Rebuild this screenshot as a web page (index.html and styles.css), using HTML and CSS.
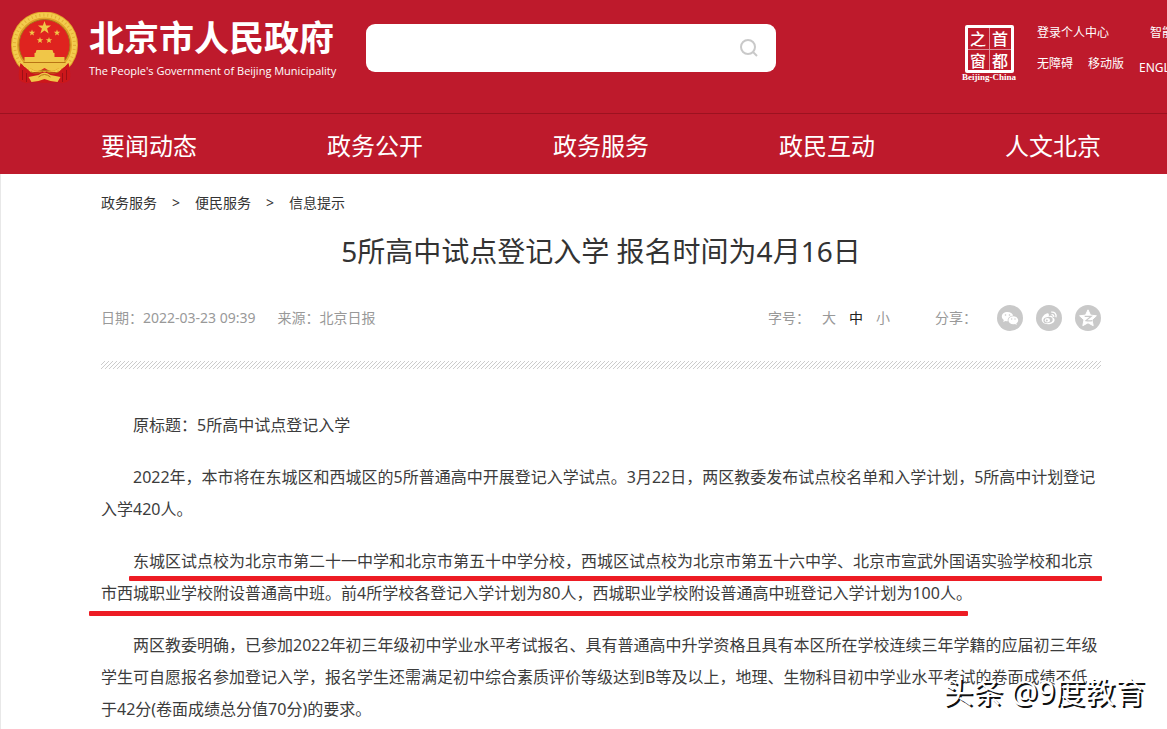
FILE: index.html
```html
<!DOCTYPE html>
<html lang="zh-CN">
<head>
<meta charset="utf-8">
<title>5所高中试点登记入学 报名时间为4月16日</title>
<link rel="stylesheet" href="styles.css">
</head>
<body>
<div class="page">
  <header class="site-header">
    <div class="masthead">
      <a class="brand" href="#">
        <svg class="emblem" viewBox="0 0 68 72" aria-hidden="true">
          <circle cx="34" cy="33" r="33.500" fill="#e3a42a"/>
          <circle cx="34" cy="33" r="30" fill="none" stroke="#f3cc4e" stroke-width="5"/>
          <circle cx="34" cy="33" r="30" fill="none" stroke="#e4ae34" stroke-width="3" stroke-dasharray="1 3"/>
          <circle cx="34" cy="33" r="25.500" fill="#df231f" stroke="#a8741c" stroke-width="1"/>
          <path d="M10 51 Q7 62 9 68 Q14 73 21 70 L34 71 L47 70 Q54 73 59 68 Q61 62 58 51 L48 60 H20z" fill="#cc171b"/>
          <path d="M12 58v10M16 61v9M52 61v9M56 58v10" stroke="#9c1016" stroke-width="1"/>
          <g fill="#f0c648">
            <path d="M34 9l1.600 4.600h5l-4 3 1.500 4.800-4.100-2.900-4.100 2.900 1.500-4.800-4-3h5z"/>
            <path id="small-star" d="M21.500 17.500l.8 2.200h2.400l-1.900 1.500.7 2.400-2-1.400-2 1.400.7-2.400-1.900-1.500h2.400z"/>
            <use href="#small-star" x="25"/>
            <use href="#small-star" x="8" y="7.500"/>
            <use href="#small-star" x="17" y="7.500"/>
            <path d="M26 38h16l1 3H25zM24 41h20v4H24zM14 45h40v5H14z"/>
            <path d="M11 51h46l-3 4q-7 1-9 3-6 2-11-2-5 4-11 2-2-2-9-3z"/>
            <path d="M18 65l10-2q6-5 12 0l10 2-3 5-7-1-6-2-6 2-7 1z"/>
          </g>
          <path d="M13 50.500h42M20 60q8 3 14-2 6 5 14 2M28 65q6-5 12 0" fill="none" stroke="#b97515" stroke-width="1"/>
        </svg>
        <span class="brand-text">
          <strong class="brand-name">北京市人民政府</strong>
          <span class="brand-sub">The People's Government of Beijing Municipality</span>
        </span>
      </a>
      <form class="search" role="search">
        <input class="search-input" type="text" aria-label="搜索">
        <button class="search-button" type="button" aria-label="搜索">
          <svg width="20" height="20" viewBox="0 0 20 20" fill="none" stroke="#c9c9c9" stroke-width="2" aria-hidden="true"><circle cx="9" cy="9" r="7"/><path d="M14 14l4 4"/></svg>
        </button>
      </form>
      <a class="capital" href="#">
        <span class="seal"><span>之</span><span>首</span><span>窗</span><span>都</span></span>
        <span class="seal-caption">Beijing-China</span>
      </a>
      <nav class="tools" aria-label="工具">
        <div class="tools-row spread"><a href="#">登录个人中心</a><a href="#">智能问答</a></div>
        <div class="tools-row"><a href="#">无障碍</a><a href="#">移动版</a><a class="english" href="#">ENGLISH</a></div>
      </nav>
    </div>
    <nav class="main-nav" aria-label="主导航">
      <a href="#">要闻动态</a><a href="#">政务公开</a><a href="#">政务服务</a><a href="#">政民互动</a><a href="#">人文北京</a>
    </nav>
  </header>
  <main class="content">
    <nav class="crumbs" aria-label="位置"><a href="#">政务服务</a><span>&gt;</span><a href="#">便民服务</a><span>&gt;</span><a href="#">信息提示</a></nav>
    <h1 class="title">5所高中试点登记入学 报名时间为4月16日</h1>
    <div class="meta">
      <span class="source"><span>日期：2022-03-23 09:39</span><span>来源：北京日报</span></span>
      <span class="sizes"><span class="sizes-label">字号：</span><button type="button">大</button><button class="current" type="button">中</button><button type="button">小</button></span>
      <span class="share"><span class="share-label">分享：</span>
        <a href="#" aria-label="微信"><svg viewBox="0 0 26 26" aria-hidden="true"><circle cx="13" cy="13" r="13" fill="#c9c9c9"/><path d="M10.500 7C7 7 4.800 9 4.800 11.600c0 1.500.8 2.700 2 3.500l-.6 2 2.300-1.200c.8.200 1.400.3 2.300.3-.6-3.200 2-5.600 5.400-5.500C15.700 8.500 13.400 7 10.500 7z" fill="#fff"/><path d="M16.300 11.300c-2.900 0-4.900 1.800-4.900 4s2 4 4.900 4c.6 0 1.200-.1 1.700-.2l1.800 1-.5-1.700c1.200-.8 1.900-1.900 1.900-3.100 0-2.200-2.100-4-4.900-4z" fill="#fff"/><g fill="#c9c9c9"><circle cx="8.500" cy="10" r=".8"/><circle cx="12.500" cy="10" r=".8"/><circle cx="14.700" cy="14" r=".7"/><circle cx="18" cy="14" r=".7"/></g></svg></a>
        <a href="#" aria-label="微博"><svg viewBox="0 0 26 26" aria-hidden="true"><circle cx="13" cy="13" r="13" fill="#c9c9c9"/><path d="M12.500 8.700c-1-1-3.200.1-4.800 1.900-1.200 1.300-2 2.600-2 4 0 2.800 3 4.700 6.300 4.700 3.700 0 6.600-2.100 6.600-4.400 0-1.300-1-2-2-2.300.4-1.400-.7-2.400-3.900-1.400.4-1 .3-2-.2-2.500z" fill="#fff"/><ellipse cx="12" cy="15" rx="4.700" ry="3.100" transform="rotate(-8 12 15)" fill="#c9c9c9"/><ellipse cx="11.400" cy="15.200" rx="2.600" ry="2.200" fill="#fff"/><circle cx="10.800" cy="15.600" r="1" fill="#c9c9c9"/><path d="M15.500 9.700c1.500-.3 2.600.8 2.200 2.300M15.200 7.200c3.200-.7 5.600 2 4.700 5" fill="none" stroke="#fff" stroke-width="1.300"/></svg></a>
        <a href="#" aria-label="QQ空间"><svg viewBox="0 0 26 26" aria-hidden="true"><circle cx="13" cy="13" r="13" fill="#c9c9c9"/><path d="M13 4.800l2.500 5.300 5.900.7-4.400 4 1.200 5.900-5.200-2.900-5.200 2.900 1.200-5.900-4.400-4 5.900-.7z" fill="#fff" stroke="#fff" stroke-linejoin="round"/><path d="M9.700 11.300h6.500l-5.200 4.300c2 .5 4 .5 6.300 0" fill="none" stroke="#c9c9c9" stroke-width="1.200"/></svg></a>
      </span>
    </div>
    <article class="article">
      <p>原标题：5所高中试点登记入学</p>
      <p>2022年，本市将在东城区和西城区的5所普通高中开展登记入学试点。3月22日，两区教委发布试点校名单和入学计划，5所高中计划登记入学420人。</p>
      <p class="marked">东城区试点校为北京市第二十一中学和北京市第五十中学分校，西城区试点校为北京市第五十六中学、北京市宣武外国语实验学校和北京市西城职业学校附设普通高中班。前4所学校各登记入学计划为80人，西城职业学校附设普通高中班登记入学计划为100人。</p>
      <p>两区教委明确，已参加2022年初三年级初中学业水平考试报名、具有普通高中升学资格且具有本区所在学校连续三年学籍的应届初三年级学生可自愿报名参加登记入学，报名学生还需满足初中综合素质评价等级达到B等及以上，地理、生物科目初中学业水平考试的卷面成绩不低于42分(卷面成绩总分值70分)的要求。</p>
    </article>
  </main>
</div>
<div class="watermark">头条 @9度教育</div>
</body>
</html>
```
FILE: styles.css
```css
* { box-sizing: border-box; }
body {
  margin: 0;
  min-height: 100vh;
  position: relative;
  overflow: hidden;
  background: #fff;
  color: #333;
  font-family: "Noto Sans", "Noto Sans CJK SC", sans-serif;
}
a { color: inherit; text-decoration: none; }
button { border: 0; padding: 0; background: none; color: inherit; font: inherit; }
.page { min-width: 1202px; min-height: 100vh; box-shadow: inset 1px 0 #e8e8e8; }
.site-header { background: #be1a2c; color: #fff; }
.masthead { display: flex; align-items: flex-start; height: 114px; padding-left: 10px; border-bottom: 1px solid #9c1220; }
.brand { display: flex; gap: 10px; width: 356px; padding-top: 12px; }
.emblem { width: 69px; height: 72px; }
.brand-text { display: flex; flex-direction: column; }
.brand-name { font-size: 35px; line-height: 51px; white-space: nowrap; }
.brand-sub { font: 11px/15px "Open Sans", sans-serif; white-space: nowrap; }
.search { display: flex; align-items: center; width: 410px; height: 48px; margin-top: 24px; border-radius: 9px; background: #fff; }
.search-input { flex: 1; min-width: 0; height: 100%; padding: 0 16px; border: 0; background: none; font: inherit; outline: 0; }
.search-button { display: flex; margin-right: 17px; }
.capital { display: flex; flex-direction: column; align-items: center; width: 56px; margin: 25px 0 0 185px; }
.seal { display: grid; grid-template: 1fr 1fr / 1fr 1fr; gap: 1px; width: 49px; height: 48px; border: 3px solid #fff; border-radius: 2px; background: #e0909a; }
.seal span { display: flex; align-items: center; justify-content: center; background: #be1a2c; font: 500 16px/16px "Noto Sans CJK SC", sans-serif; }
.seal-caption { font: bold 9px/9px "Liberation Serif", serif; white-space: nowrap; }
.tools { flex: 1; padding: 23px 0 0 20px; font-size: 12px; line-height: 20px; white-space: nowrap; }
.tools-row { display: flex; gap: 15px; margin-bottom: 11px; }
.tools-row.spread { gap: 41px; }
.english { padding-top: 4px; }
.main-nav { display: flex; justify-content: space-between; width: 1000px; height: 60px; margin: 0 auto; font-size: 24px; line-height: 63px; }
.content { width: 1000px; margin: 0 auto; }
.crumbs { display: flex; gap: 15px; padding-top: 18px; font-size: 14px; line-height: 22px; }
.title { margin: 17px 0 0; font-size: 28px; line-height: 40px; font-weight: 400; text-align: center; }
.meta { display: flex; align-items: center; height: 26px; margin-top: 34px; color: #999; font-size: 14px; line-height: 22px; }
.source { display: flex; gap: 22px; flex: 1; }
.sizes { display: flex; gap: 13px; }
.sizes-label { width: 41px; white-space: nowrap; }
.current { color: #222; }
.share { display: flex; align-items: center; gap: 13px; margin-left: 45px; }
.share-label { width: 49px; white-space: nowrap; }
.share a { display: flex; }
.share svg { width: 26px; height: 26px; }
.article { margin-top: 30px; color: #3c3c3c; font-size: 16px; line-height: 32px; }
.article::before { content: ""; display: block; height: 8px; margin-bottom: 40px; background: linear-gradient(135deg, #fff 42%, #ccc 42% 58%, #fff 58%) 0 0 / 4px 4px; }
.article p { margin: 0 0 20px; text-indent: 32px; }
.marked { position: relative; }
.marked::before, .marked::after { content: ""; position: absolute; height: 5px; border-radius: 1px; background: #ed1c24; }
.marked::before { left: 28px; right: -1px; top: 31px; }
.marked::after { left: -12px; right: 133px; top: 66px; }
.watermark { position: absolute; right: 22px; top: 670px; color: #fff; font-size: 30px; line-height: 44px; white-space: nowrap; text-shadow: 2px 2px 0 #111; }
```
